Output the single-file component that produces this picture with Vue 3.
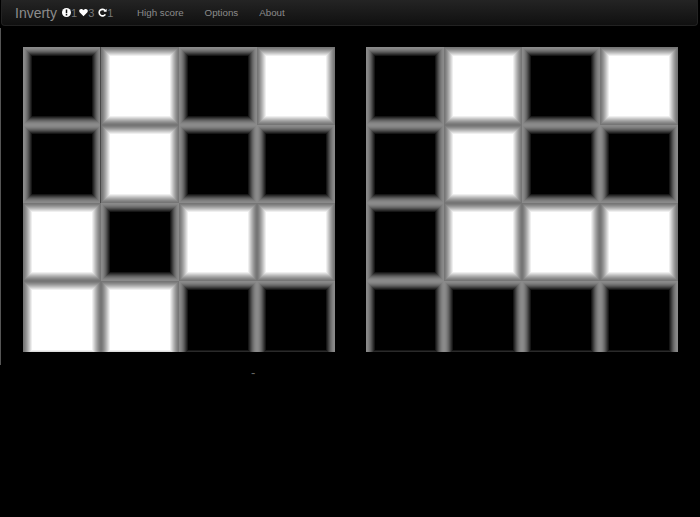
<script setup>
const boards = [
  [0, 1, 0, 1, 0, 1, 0, 0, 1, 0, 1, 1, 1, 1, 0, 0],
  [0, 1, 0, 1, 0, 1, 0, 0, 0, 1, 1, 1, 0, 0, 0, 0]
]
const links = ['High score', 'Options', 'About']
</script>

<template>
  <div class="navbar">
    <span class="brand">Inverty</span>
    <div class="stats">
      <svg class="icon" viewBox="0 0 12 12">
        <circle cx="6" cy="6" r="6" fill="#fff" />
        <rect x="5" y="2" width="2" height="5" fill="#111" />
        <rect x="5" y="8" width="2" height="2" fill="#111" />
      </svg>
      <span>1</span>
      <svg class="icon" viewBox="0 0 12 12">
        <path d="M6 11 L0.8 5.6 C-0.6 3.4 0.8 1.2 3 1.2 C4.4 1.2 5.4 2 6 3 C6.6 2 7.6 1.2 9 1.2 C11.2 1.2 12.6 3.4 11.2 5.6 Z" fill="#fff" />
      </svg>
      <span>3</span>
      <svg class="icon reload" viewBox="0 0 12 12">
        <path d="M9.6 3.6 A4.4 4.4 0 1 0 9.8 8.4" fill="none" stroke="#fff" stroke-width="2.2" />
        <path d="M7.4 5 L11.5 5 L11.5 1 Z" fill="#fff" />
      </svg>
      <span>1</span>
    </div>
    <a v-for="link in links" :key="link" class="link">{{ link }}</a>
  </div>
  <div class="page">
    <div class="boards">
      <div v-for="(board, b) in boards" :key="b" class="board">
        <div
          v-for="(on, i) in board"
          :key="i"
          class="tile"
          :class="{ on: on, seam: b === 0 && (i === 0 || i === 4) }"
        ></div>
      </div>
    </div>
  </div>
  <div class="status">-</div>
</template>

<style>
html, body {
  background: #000;
}
</style>

<style scoped>
.navbar {
  height: 25px;
  margin: 0 2px 0 1px;
  display: flex;
  align-items: center;
  padding-left: 13px;
  background: linear-gradient(#242424, #101010);
  border: 1px solid #222;
  border-top: 0;
  border-radius: 0 0 4px 4px;
  font-family: "Liberation Sans", Arial, sans-serif;
  color: #8c8c8c;
  font-size: 9.75px;
}
.brand {
  font-size: 14px;
  width: 47px;
}
.stats {
  display: flex;
  align-items: center;
  font-size: 11px;
  width: 75px;
  color: #777;
}
.stats span {
  margin-right: 2px;
}
.icon {
  width: 9px;
  height: 9px;
}
.icon.reload {
  margin-left: 2px;
}
.link {
  margin-right: 21px;
}
.page {
  margin-top: 2px;
  height: 337px;
  border-left: 1px solid #555;
}
.boards {
  display: flex;
  gap: 31px;
  padding: 19px 0 0 22px;
}
.board {
  width: 312px;
  height: 305px;
  display: grid;
  grid-template-columns: repeat(4, 78px);
  grid-auto-rows: 78px;
  overflow: hidden;
}
.tile {
  background: #000;
  box-shadow:
    inset 0 0 0 1px #8a8a8a,
    inset 0 0 0 2px #868686,
    inset 0 0 0 3px #7e7e7e,
    inset 0 0 0 4px #727272,
    inset 0 0 0 5px #646464,
    inset 0 0 0 6px #525252,
    inset 0 0 0 7px #3e3e3e,
    inset 0 0 0 8px #2a2a2a,
    inset 0 0 0 9px #161616;
}
.tile.on {
  background: #fff;
  box-shadow:
    inset 0 0 0 1px #767676,
    inset 0 0 0 2px #7e7e7e,
    inset 0 0 0 3px #8a8a8a,
    inset 0 0 0 4px #989898,
    inset 0 0 0 5px #a8a8a8,
    inset 0 0 0 6px #b9b9b9,
    inset 0 0 0 7px #cbcbcb,
    inset 0 0 0 8px #dddddd,
    inset 0 0 0 9px #efefef;
}
.tile.seam {
  box-shadow:
    inset -1px 0 0 #484848,
    inset 0 0 0 1px #8a8a8a,
    inset 0 0 0 2px #868686,
    inset 0 0 0 3px #7e7e7e,
    inset 0 0 0 4px #727272,
    inset 0 0 0 5px #646464,
    inset 0 0 0 6px #525252,
    inset 0 0 0 7px #3e3e3e,
    inset 0 0 0 8px #2a2a2a,
    inset 0 0 0 9px #161616;
}
.status {
  margin-top: 2px;
  margin-left: 251px;
  font-family: "Liberation Sans", Arial, sans-serif;
  font-size: 13px;
  line-height: 12px;
  color: #666;
}
</style>
